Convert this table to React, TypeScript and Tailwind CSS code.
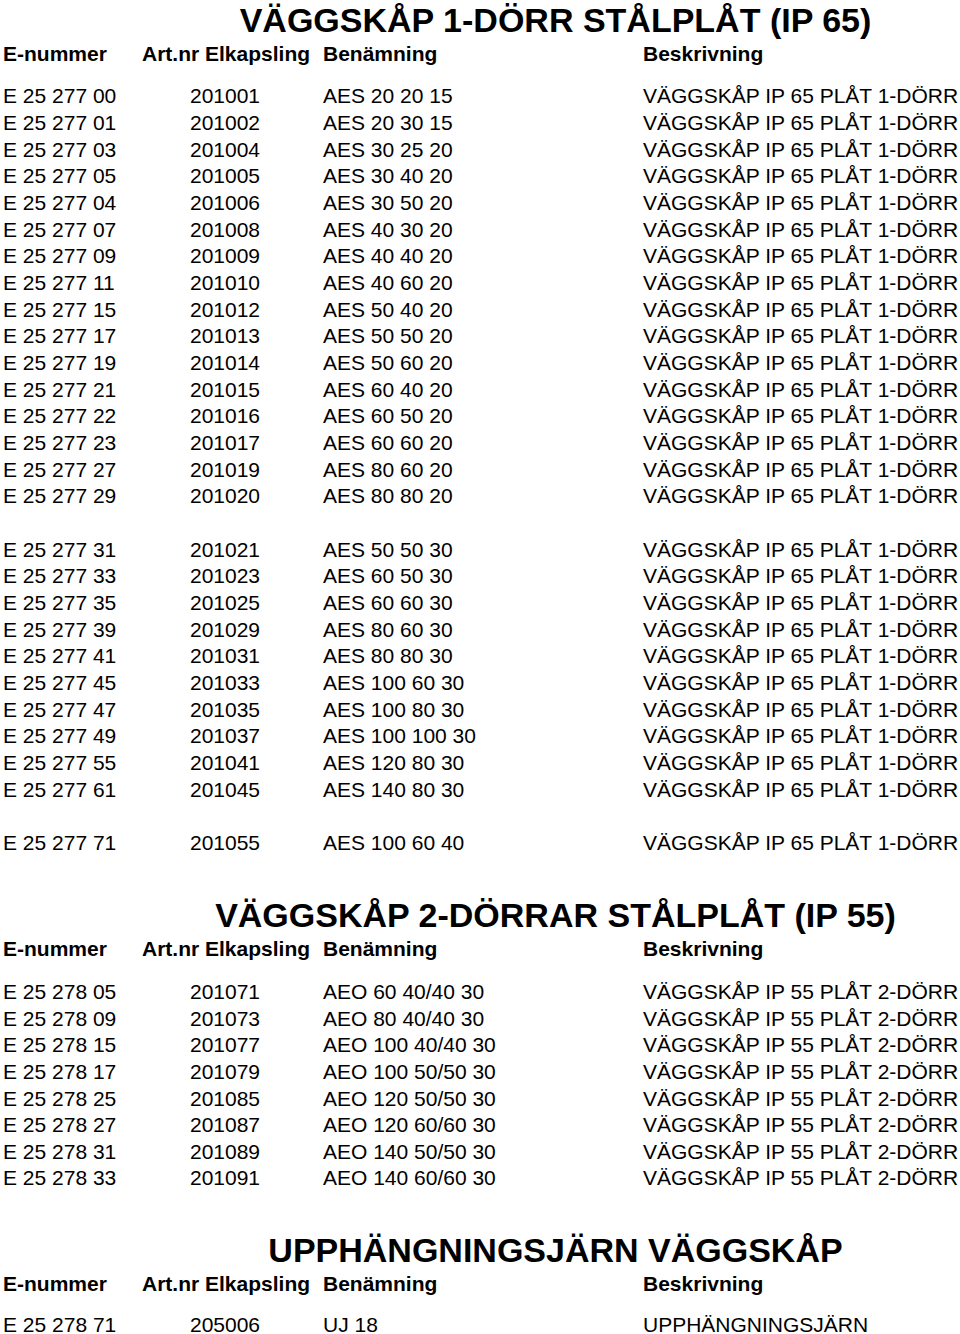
const section1: [string, string, string][] = [
  ['E 25 277 00', '201001', 'AES 20 20 15'],
  ['E 25 277 01', '201002', 'AES 20 30 15'],
  ['E 25 277 03', '201004', 'AES 30 25 20'],
  ['E 25 277 05', '201005', 'AES 30 40 20'],
  ['E 25 277 04', '201006', 'AES 30 50 20'],
  ['E 25 277 07', '201008', 'AES 40 30 20'],
  ['E 25 277 09', '201009', 'AES 40 40 20'],
  ['E 25 277 11', '201010', 'AES 40 60 20'],
  ['E 25 277 15', '201012', 'AES 50 40 20'],
  ['E 25 277 17', '201013', 'AES 50 50 20'],
  ['E 25 277 19', '201014', 'AES 50 60 20'],
  ['E 25 277 21', '201015', 'AES 60 40 20'],
  ['E 25 277 22', '201016', 'AES 60 50 20'],
  ['E 25 277 23', '201017', 'AES 60 60 20'],
  ['E 25 277 27', '201019', 'AES 80 60 20'],
  ['E 25 277 29', '201020', 'AES 80 80 20'],
  ['', '', ''],
  ['E 25 277 31', '201021', 'AES 50 50 30'],
  ['E 25 277 33', '201023', 'AES 60 50 30'],
  ['E 25 277 35', '201025', 'AES 60 60 30'],
  ['E 25 277 39', '201029', 'AES 80 60 30'],
  ['E 25 277 41', '201031', 'AES 80 80 30'],
  ['E 25 277 45', '201033', 'AES 100 60 30'],
  ['E 25 277 47', '201035', 'AES 100 80 30'],
  ['E 25 277 49', '201037', 'AES 100 100 30'],
  ['E 25 277 55', '201041', 'AES 120 80 30'],
  ['E 25 277 61', '201045', 'AES 140 80 30'],
  ['', '', ''],
  ['E 25 277 71', '201055', 'AES 100 60 40'],
];

const section2: [string, string, string][] = [
  ['E 25 278 05', '201071', 'AEO 60 40/40 30'],
  ['E 25 278 09', '201073', 'AEO 80 40/40 30'],
  ['E 25 278 15', '201077', 'AEO 100 40/40 30'],
  ['E 25 278 17', '201079', 'AEO 100 50/50 30'],
  ['E 25 278 25', '201085', 'AEO 120 50/50 30'],
  ['E 25 278 27', '201087', 'AEO 120 60/60 30'],
  ['E 25 278 31', '201089', 'AEO 140 50/50 30'],
  ['E 25 278 33', '201091', 'AEO 140 60/60 30'],
];

function Row({ cells, desc, tight }: { cells: [string, string, string]; desc: string; tight?: boolean }) {
  return (
    <div
      className={`grid grid-cols-[139px_166px_335px_1fr] items-center whitespace-nowrap ${
        tight ? 'h-[18px] leading-[18px]' : 'h-[26.67px] leading-none'
      }`}
    >
      <div>{cells[0]}</div>
      <div className="text-center">{cells[1]}</div>
      <div className="pl-[15px]">{cells[2]}</div>
      <div>{cells[0] ? desc : ''}</div>
    </div>
  );
}

function Header() {
  return (
    <div className="grid grid-cols-[139px_181px_320px_1fr] h-[27px] items-center leading-none font-bold whitespace-nowrap">
      <div>E-nummer</div>
      <div>Art.nr Elkapsling</div>
      <div>Benämning</div>
      <div>Beskrivning</div>
    </div>
  );
}

function Title({ children }: { children: string }) {
  return (
    <div className="h-[40px] pl-[148px] flex items-center justify-center text-[34px] font-bold leading-none whitespace-nowrap">
      {children}
    </div>
  );
}

export default function App() {
  return (
    <div className="w-[960px] h-[1334px] bg-white text-black pl-[3px] text-[21px] font-['Liberation_Sans',Arial,sans-serif] overflow-hidden">
      <Title>VÄGGSKÅP 1-DÖRR STÅLPLÅT (IP 65)</Title>
      <Header />
      <div className="mt-[15.67px]">
        {section1.map((r, i) => (
          <Row key={i} cells={r} desc="VÄGGSKÅP IP 65 PLÅT 1-DÖRR" />
        ))}
      </div>

      <div className="mt-[39.7px]">
        <Title>VÄGGSKÅP 2-DÖRRAR STÅLPLÅT (IP 55)</Title>
      </div>
      <Header />
      <div className="mt-[15.7px]">
        {section2.map((r, i) => (
          <Row key={i} cells={r} desc="VÄGGSKÅP IP 55 PLÅT 2-DÖRR" />
        ))}
      </div>

      <div className="mt-[39px]">
        <Title>UPPHÄNGNINGSJÄRN VÄGGSKÅP</Title>
      </div>
      <Header />
      <div className="mt-[18.5px]">
        <Row tight cells={['E 25 278 71', '205006', 'UJ 18']} desc="UPPHÄNGNINGSJÄRN" />
      </div>
    </div>
  );
}
